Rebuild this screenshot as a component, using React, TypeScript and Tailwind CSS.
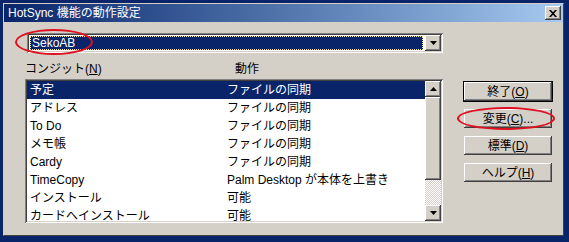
import React from 'react'

const ROWS: [string, string][] = [
  ['予定', 'ファイルの同期'],
  ['アドレス', 'ファイルの同期'],
  ['To Do', 'ファイルの同期'],
  ['メモ帳', 'ファイルの同期'],
  ['Cardy', 'ファイルの同期'],
  ['TimeCopy', 'Palm Desktop が本体を上書き'],
  ['インストール', '可能'],
  ['カードへインストール', '可能'],
]

const RAISED = 'bg-[#d4d0c8] shadow-[inset_-1px_-1px_#404040,inset_1px_1px_#fff,inset_-2px_-2px_#808080,inset_2px_2px_#d4d0c8]'
const SUNKEN = 'shadow-[inset_1px_1px_#808080,inset_-1px_-1px_#fff,inset_2px_2px_#404040,inset_-2px_-2px_#d4d0c8]'

function Arrow({ up }: { up?: boolean }) {
  return (
    <svg width="7" height="4" viewBox="0 0 7 4" className={up ? 'rotate-180' : ''}>
      <path d="M0 0h7L3.5 4z" fill="#000" />
    </svg>
  )
}

function Btn({ label, k, rest, isDefault }: { label: string; k: string; rest?: string; isDefault?: boolean }) {
  return (
    <div className={`w-[88px] h-[19px] flex items-center justify-center text-[12px] leading-none ${RAISED} ${isDefault ? 'outline outline-1 outline-black' : ''}`}>
      {label}(<span className="underline">{k}</span>){rest}
    </div>
  )
}

export default function App() {
  return (
    <div className="relative w-[569px] h-[242px] bg-[#0a246a] pt-[3px] pl-[3px] overflow-hidden font-['Liberation_Sans','Noto_Sans_CJK_JP',sans-serif] text-black">
      <div className="w-[561px] h-[233px] bg-[#d4d0c8] border-t border-l border-t-[#d4d0c8] border-l-[#d4d0c8] border-b border-r border-b-[#404040] border-r-[#404040]">
        {/* title bar */}
        <div className="h-[18px] bg-linear-to-r from-[#0a246a] to-[#a6caf0] flex items-center pl-[4px] pr-[2px]">
          <span className="text-white text-[12px] leading-none">HotSync 機能の動作設定</span>
          <div className={`ml-auto w-[16px] h-[14px] flex items-center justify-center ${RAISED}`}>
            <svg width="8" height="7" viewBox="0 0 8 7">
              <path d="M0 0h2l2 2.3L6 0h2L5 3.5 8 7H6L4 4.7 2 7H0l3-3.5z" fill="#000" />
            </svg>
          </div>
        </div>

        <div className="flex pt-[11px] pl-[23px]">
          <div className="w-[416px]">
            {/* combo */}
            <div className={`h-[20px] bg-white p-[2px] flex ${SUNKEN}`}>
              <div className="flex-1 m-[1px] mr-[2px] bg-[#0a246a] border border-dotted border-[#f0e0a0] text-white text-[12px] leading-[13px] pl-[1px]">
                SekoAB
              </div>
              <div className={`w-[16px] h-[16px] flex items-center justify-center ${RAISED}`}>
                <Arrow />
              </div>
            </div>

            {/* column labels */}
            <div className="-ml-[2px] mt-[9px] h-[17px] flex text-[12px] leading-[14px]">
              <div className="w-[210px]">
                コンジット(<span className="underline">N</span>)
              </div>
              <div>動作</div>
            </div>

            {/* list */}
            <div className={`-ml-[2px] w-[418px] h-[144px] bg-white p-[2px] flex ${SUNKEN}`}>
              <div className="flex-1 overflow-hidden">
                {ROWS.map(([a, b], i) => (
                  <div
                    key={a}
                    className={`h-[18px] flex items-center pl-[3px] text-[12px] leading-none ${i === 0 ? 'bg-[#0a246a] text-white' : ''}`}
                  >
                    <div className="w-[197px] shrink-0">{a}</div>
                    <div className="whitespace-nowrap">{b}</div>
                  </div>
                ))}
              </div>
              <div className="w-[16px] flex flex-col">
                <div className={`h-[16px] flex items-center justify-center ${RAISED}`}>
                  <Arrow up />
                </div>
                <div className={`h-[83px] ${RAISED}`} />
                <div className="flex-1 bg-[repeating-conic-gradient(#fff_0_25%,#d4d0c8_0_50%)] bg-[length:2px_2px]" />
                <div className={`h-[16px] flex items-center justify-center ${RAISED}`}>
                  <Arrow />
                </div>
              </div>
            </div>
          </div>

          {/* buttons */}
          <div className="ml-[21px] mt-[49px] flex flex-col gap-[8px]">
            <Btn label="終了" k="O" isDefault />
            <Btn label="変更" k="C" rest="..." />
            <Btn label="標準" k="D" />
            <Btn label="ヘルプ" k="H" />
          </div>
        </div>
      </div>

      {/* red annotation ellipses */}
      <div className="absolute left-[15px] top-[29px] w-[78px] h-[26px] rounded-[50%] border-2 border-[#e01020]" />
      <div className="absolute left-[457px] top-[107px] w-[98px] h-[23px] rounded-[50%] border-2 border-[#e01020]" />
    </div>
  )
}
